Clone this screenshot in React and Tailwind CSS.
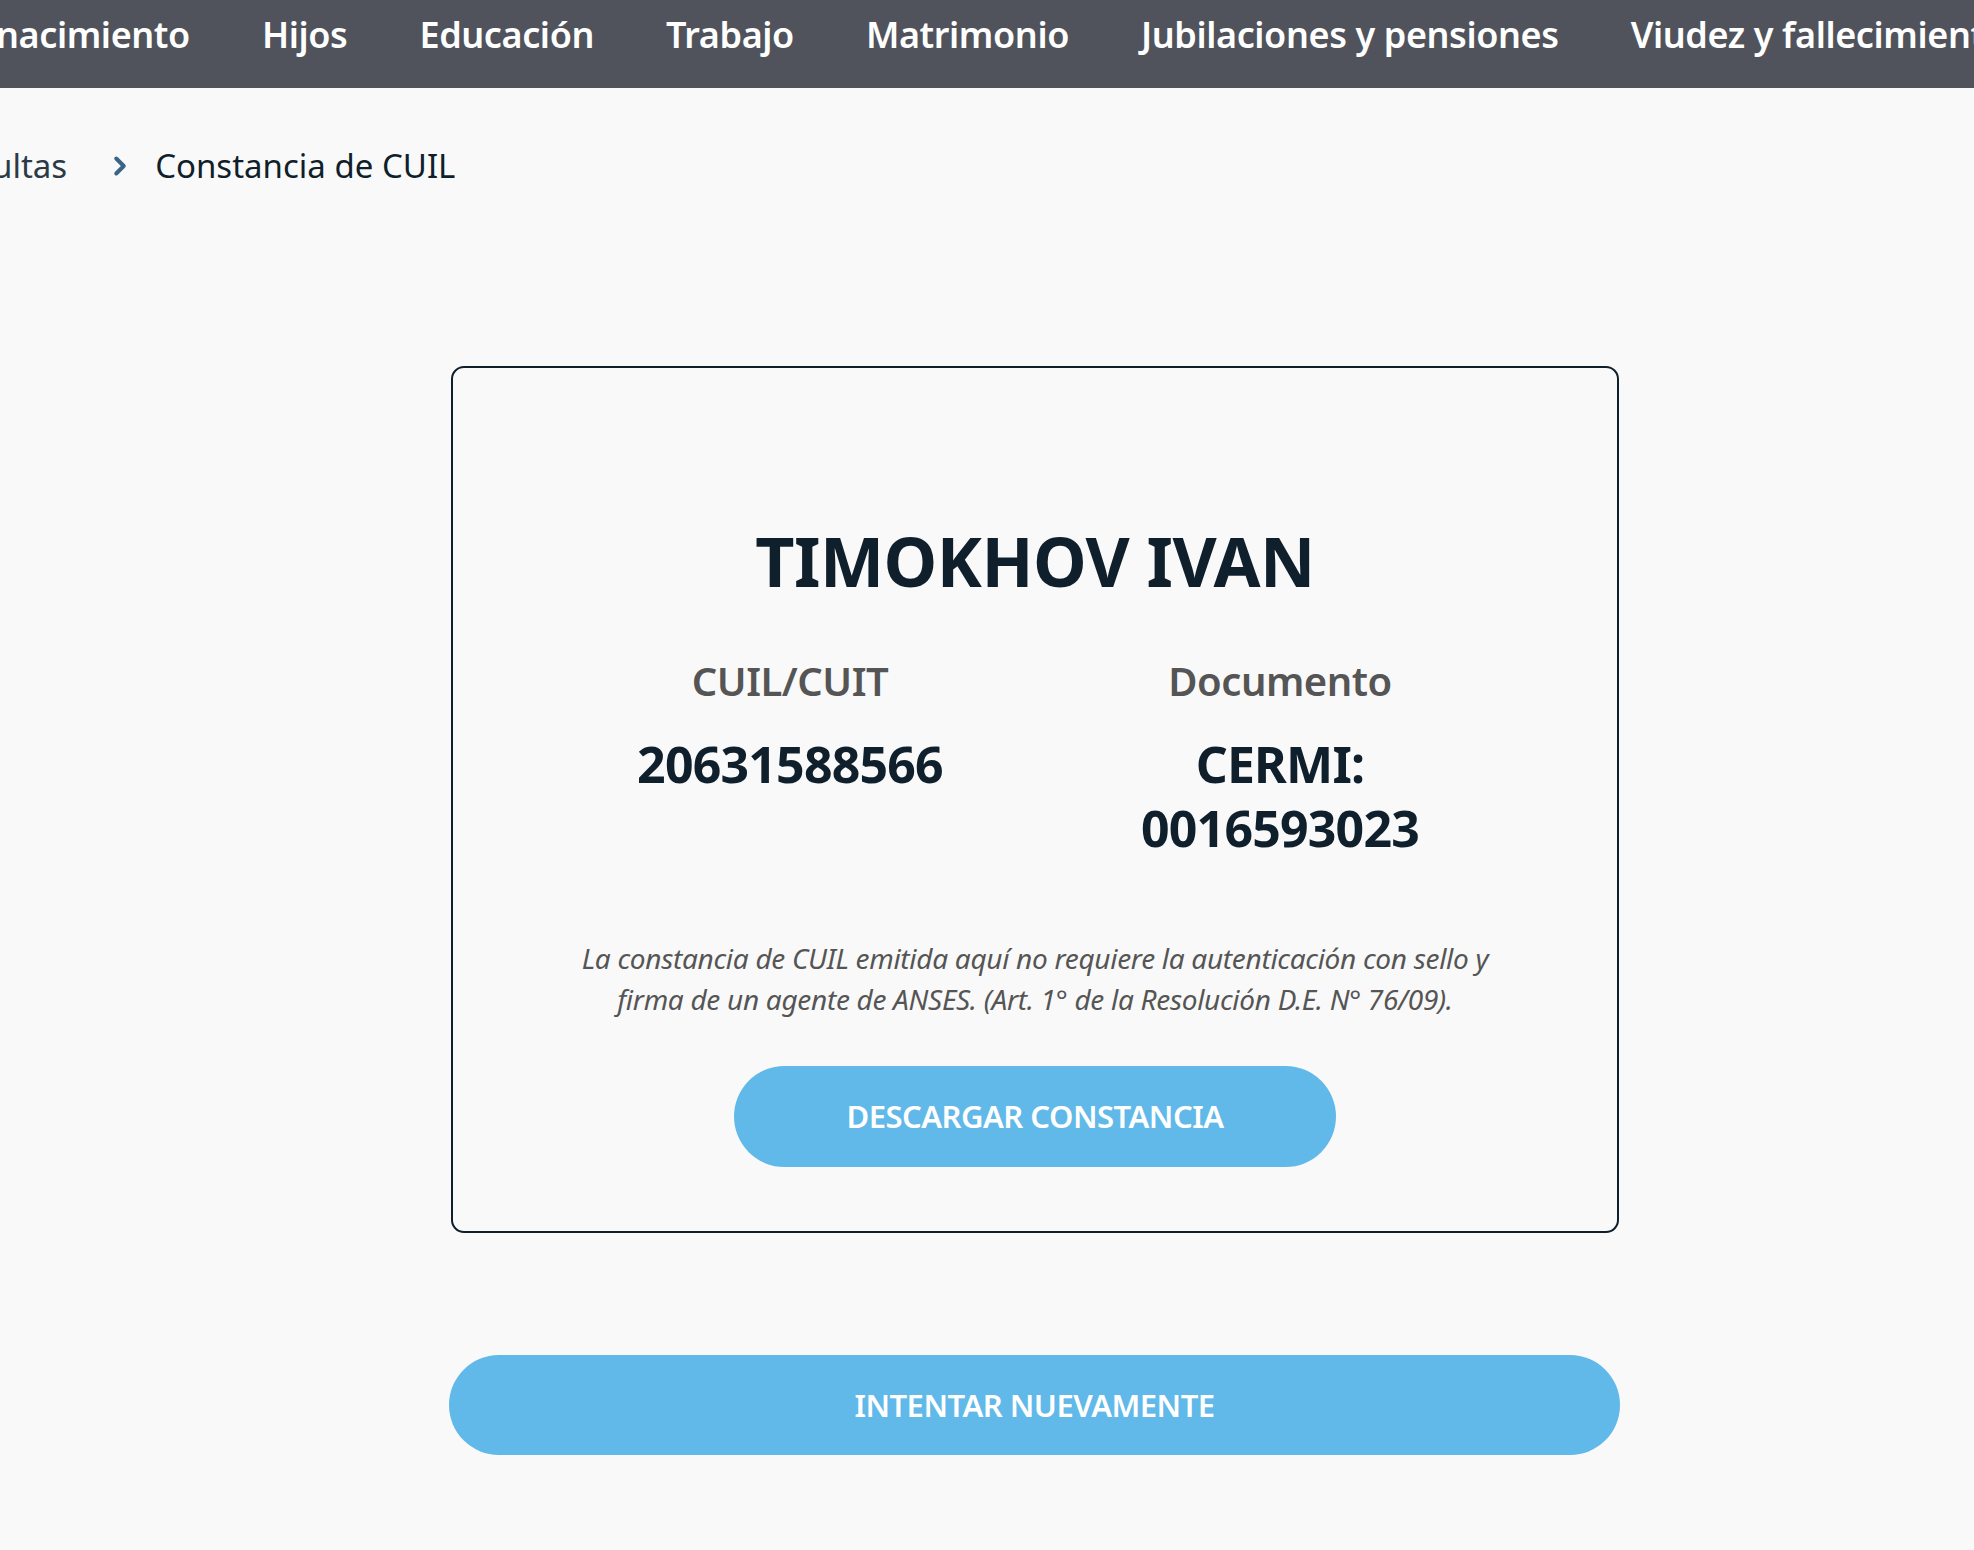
import { ChevronRight } from 'lucide-react';

const NAV = ['nacimiento', 'Hijos', 'Educación', 'Trabajo', 'Matrimonio', 'Jubilaciones y pensiones', 'Viudez y fallecimiento'];

function TopNav() {
  return (
    <nav className="h-[88px] bg-[#50535c] flex items-center gap-[72px] overflow-hidden whitespace-nowrap pb-[18px]">
      {NAV.map((item, i) => (
        <a key={item} className={`text-white text-[36px] font-semibold tracking-[-0.4px] shrink-0 ${i === 0 ? '-ml-[4px]' : ''}`}>
          {item}
        </a>
      ))}
    </nav>
  );
}

function Breadcrumb() {
  return (
    <div className="mt-[58px] h-[40px] flex items-center text-[33px] leading-[40px] whitespace-nowrap">
      <span className="-ml-[8px] text-[#2b3a47]">ultas</span>
      <ChevronRight className="ml-[38px] w-[30px] h-[30px] text-[#3b6587]" strokeWidth={3.2} />
      <span className="ml-[20px] text-[#0f1f2b]">Constancia de CUIL</span>
    </div>
  );
}

function Field({ label, children }) {
  return (
    <div className="w-[490px] flex flex-col items-center text-center">
      <div className="text-[40px] leading-[50px] font-semibold text-[#555555] tracking-[-0.5px]">{label}</div>
      <div className="mt-[26px] text-[50px] leading-[64px] font-bold text-[#0f1f2b] tracking-[-0.8px]">{children}</div>
    </div>
  );
}

export default function App() {
  return (
    <div className="min-h-screen bg-[#f9f9f9] font-['Noto_Sans',_'Open_Sans',_sans-serif] overflow-hidden">
      <TopNav />
      <Breadcrumb />

      <div className="ml-[451px] w-[1168px] mt-[180px] border-2 border-[#0f1f2b] rounded-[13px] pt-[153px] pb-[64px] flex flex-col items-center">
        <h1 className="text-[68px] leading-[80px] font-bold text-[#0f1f2b] tracking-[-0.5px]">TIMOKHOV IVAN</h1>

        <div className="mt-[55px] flex">
          <Field label="CUIL/CUIT">20631588566</Field>
          <Field label="Documento">
            CERMI:
            <br />
            0016593023
          </Field>
        </div>

        <p className="mt-[78px] w-[930px] text-center italic text-[28px] leading-[41px] text-[#555555] tracking-[-0.3px]">
          La constancia de CUIL emitida aquí no requiere la autenticación con sello y firma de un agente de ANSES. (Art. 1° de la Resolución D.E. N° 76/09).
        </p>

        <button className="mt-[46px] w-[602px] h-[101px] rounded-full bg-[#61b9e9] text-white text-[31px] font-semibold tracking-[-0.5px]">
          DESCARGAR CONSTANCIA
        </button>
      </div>

      <div className="ml-[449px] w-[1171px] mt-[122px] pb-[95px]">
        <button className="w-full h-[100px] rounded-full bg-[#61b9e9] text-white text-[31px] font-semibold tracking-[-0.5px]">
          INTENTAR NUEVAMENTE
        </button>
      </div>
    </div>
  );
}
